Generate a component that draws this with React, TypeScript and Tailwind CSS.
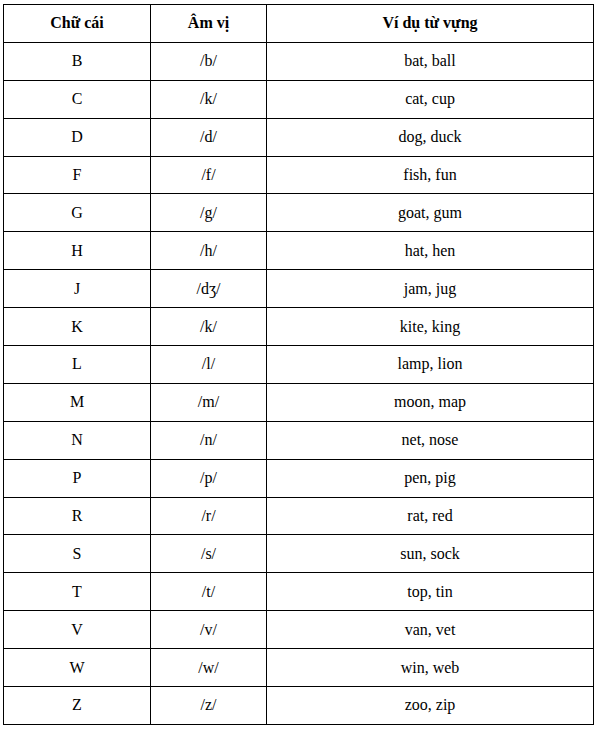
const rows: [string, string, string][] = [
  ['B', '/b/', 'bat, ball'],
  ['C', '/k/', 'cat, cup'],
  ['D', '/d/', 'dog, duck'],
  ['F', '/f/', 'fish, fun'],
  ['G', '/g/', 'goat, gum'],
  ['H', '/h/', 'hat, hen'],
  ['J', '/dʒ/', 'jam, jug'],
  ['K', '/k/', 'kite, king'],
  ['L', '/l/', 'lamp, lion'],
  ['M', '/m/', 'moon, map'],
  ['N', '/n/', 'net, nose'],
  ['P', '/p/', 'pen, pig'],
  ['R', '/r/', 'rat, red'],
  ['S', '/s/', 'sun, sock'],
  ['T', '/t/', 'top, tin'],
  ['V', '/v/', 'van, vet'],
  ['W', '/w/', 'win, web'],
  ['Z', '/z/', 'zoo, zip'],
];

const cell = 'border border-black p-0 text-center align-middle';

export default function App() {
  return (
    <div className="min-h-screen bg-white pl-[3px] pt-[4px] font-[Liberation_Serif,serif] text-[16px] text-black">
      <table className="w-[590px] table-fixed border-collapse font-[Liberation_Serif,serif] text-[16px]">
        <colgroup>
          <col className="w-[147px]" />
          <col className="w-[116px]" />
          <col className="w-[327px]" />
        </colgroup>
        <thead>
          <tr className="h-[37.9px]">
            <th className={`${cell} font-bold`}>Chữ cái</th>
            <th className={`${cell} font-bold`}>Âm vị</th>
            <th className={`${cell} font-bold`}>Ví dụ từ vựng</th>
          </tr>
        </thead>
        <tbody>
          {rows.map(([letter, sound, words]) => (
            <tr key={letter} className="h-[37.9px]">
              <td className={cell}>{letter}</td>
              <td className={cell}>{sound}</td>
              <td className={cell}>{words}</td>
            </tr>
          ))}
        </tbody>
      </table>
    </div>
  );
}
